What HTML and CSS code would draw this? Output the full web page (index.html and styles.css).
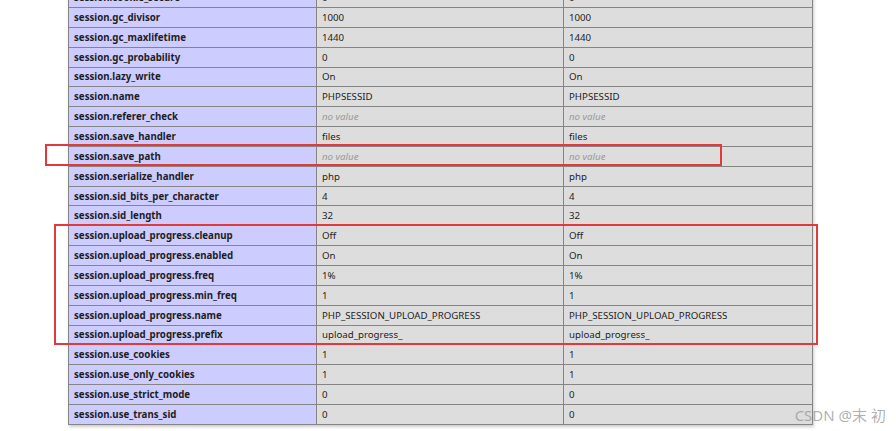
FILE: index.html
```html
<!DOCTYPE html>
<html>
<head>
<meta charset="utf-8">
<link rel="stylesheet" href="styles.css">
</head>
<body>
<div class="page">
  <table class="info">
    <colgroup><col class="c1"><col class="c2"><col class="c3"></colgroup>
    <tr class="partial"><td class="e">session.cookie_secure</td><td class="v">0</td><td class="v">0</td></tr>
    <tr><td class="e">session.gc_divisor</td><td class="v">1000</td><td class="v">1000</td></tr>
    <tr><td class="e">session.gc_maxlifetime</td><td class="v">1440</td><td class="v">1440</td></tr>
    <tr><td class="e">session.gc_probability</td><td class="v">0</td><td class="v">0</td></tr>
    <tr><td class="e">session.lazy_write</td><td class="v">On</td><td class="v">On</td></tr>
    <tr><td class="e">session.name</td><td class="v">PHPSESSID</td><td class="v">PHPSESSID</td></tr>
    <tr><td class="e">session.referer_check</td><td class="v"><i>no value</i></td><td class="v"><i>no value</i></td></tr>
    <tr><td class="e">session.save_handler</td><td class="v">files</td><td class="v">files</td></tr>
    <tr><td class="e">session.save_path</td><td class="v"><i>no value</i></td><td class="v"><i>no value</i></td></tr>
    <tr><td class="e">session.serialize_handler</td><td class="v">php</td><td class="v">php</td></tr>
    <tr><td class="e">session.sid_bits_per_character</td><td class="v">4</td><td class="v">4</td></tr>
    <tr><td class="e">session.sid_length</td><td class="v">32</td><td class="v">32</td></tr>
    <tr><td class="e">session.upload_progress.cleanup</td><td class="v">Off</td><td class="v">Off</td></tr>
    <tr><td class="e">session.upload_progress.enabled</td><td class="v">On</td><td class="v">On</td></tr>
    <tr><td class="e">session.upload_progress.freq</td><td class="v">1%</td><td class="v">1%</td></tr>
    <tr><td class="e">session.upload_progress.min_freq</td><td class="v">1</td><td class="v">1</td></tr>
    <tr><td class="e">session.upload_progress.name</td><td class="v">PHP_SESSION_UPLOAD_PROGRESS</td><td class="v">PHP_SESSION_UPLOAD_PROGRESS</td></tr>
    <tr><td class="e">session.upload_progress.prefix</td><td class="v">upload_progress_</td><td class="v">upload_progress_</td></tr>
    <tr><td class="e">session.use_cookies</td><td class="v">1</td><td class="v">1</td></tr>
    <tr><td class="e">session.use_only_cookies</td><td class="v">1</td><td class="v">1</td></tr>
    <tr><td class="e">session.use_strict_mode</td><td class="v">0</td><td class="v">0</td></tr>
    <tr><td class="e">session.use_trans_sid</td><td class="v">0</td><td class="v">0</td></tr>
  </table>
  <div class="mark mark-one"></div>
  <div class="mark mark-two"></div>
  <div class="watermark">CSDN @末 初</div>
</div>
</body>
</html>
```

FILE: styles.css
```css
html, body {
  margin: 0;
  padding: 0;
  background: #fff;
}
.page {
  position: relative;
  width: 896px;
  height: 431px;
  overflow: hidden;
  font-family: "Noto Sans", "Open Sans", sans-serif;
}
.info {
  border-collapse: collapse;
  table-layout: fixed;
  width: 744px;
  margin: -12.85px 0 0 68px;
  box-shadow: 1px 2px 3px #ccc;
  font-size: 9.7px;
  color: #1e1e1e;
}
.c1 { width: 248px; }
.c2 { width: 247px; }
.c3 { width: 249px; }
.info tr { height: 19.85px; }
.info td {
  border: 1px solid #858585;
  padding: 1px 5px 0 5px;
  vertical-align: middle;
  white-space: nowrap;
  overflow: hidden;
  line-height: 12px;
}
.e {
  background: #ccf;
  font-weight: bold;
}
.v {
  background: #ddd;
}
.v i {
  color: #999;
}
.mark {
  position: absolute;
  border: 2px solid #e3393c;
}
.mark-one {
  left: 45px;
  top: 144px;
  width: 673px;
  height: 18px;
}
.mark-two {
  left: 54px;
  top: 224px;
  width: 760px;
  height: 117px;
}
.watermark {
  position: absolute;
  right: 10px;
  top: 404px;
  font-size: 15px;
  color: rgba(150,150,150,0.75);
  font-family: "Noto Sans", "Noto Sans CJK SC", sans-serif;
}
```
